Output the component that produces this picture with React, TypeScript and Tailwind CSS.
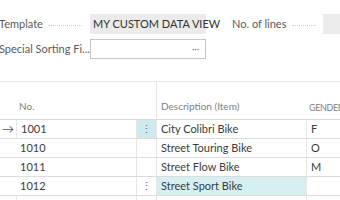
import React from "react";

const rows = [
  { no: "1001", desc: "City Colibri Bike", gender: "F", current: true },
  { no: "1010", desc: "Street Touring Bike", gender: "O" },
  { no: "1011", desc: "Street Flow Bike", gender: "M" },
  { no: "1012", desc: "Street Sport Bike", gender: "", focus: true },
];

function Leader() {
  return <span className="flex-1 border-b border-dotted border-[#cfcfcf] h-0 mt-[3px]" />;
}

export default function App() {
  return (
    <div
      className="w-[340px] h-[200px] overflow-hidden bg-white text-[11px] text-[#3c3c3c]"
      style={{ fontFamily: 'Lato, "Liberation Sans", sans-serif' }}
    >
      {/* fields */}
      <div className="flex flex-col gap-[5px] pt-[14px] h-[81px]">
        <div className="flex items-center h-5">
          <div className="w-[90px] flex items-center gap-[5px] pr-[8px] shrink-0 text-[#5a5a5a]">
            <span className="ml-[-1px]">Template</span>
            <Leader />
          </div>
          <div className="w-[116px] h-5 bg-[#ebebeb] flex items-center pl-[3px] shrink-0 whitespace-nowrap text-[#333]">
            MY CUSTOM DATA VIEW
          </div>
          <div className="ml-[26px] w-[91px] pr-[7px] flex items-center gap-[6px] text-[#5a5a5a] whitespace-nowrap shrink-0">
            <span>No. of lines</span>
            <Leader />
          </div>
          <div className="w-[40px] h-5 bg-[#ebebeb] shrink-0" />
        </div>
        <div className="flex items-center h-5">
          <div className="w-[90px] pr-[8px] shrink-0 text-[#5a5a5a] whitespace-nowrap overflow-hidden">
            <span className="ml-[-1px]">Special Sorting Fi...</span>
          </div>
          <div className="w-[116px] h-5 border border-[#c6c6c6] flex items-center justify-end pr-[6px] text-[#777] text-[9px] shrink-0">
            ···
          </div>
        </div>
      </div>

      {/* grid */}
      <div className="border-t border-[#e6e6e6]">
        <div className="flex h-[38px] border-b border-[#dcdcdc] text-[#808080] text-[10px]">
          <div className="w-[156px] shrink-0 flex items-end pb-[5px] pl-[19px]">No.</div>
          <div className="w-[150px] shrink-0 flex items-end pb-[5px] pl-[4px] border-l border-[#e6e6e6]">
            Description (Item)
          </div>
          <div className="flex-1 flex items-end pb-[5px] pl-[3px] whitespace-nowrap text-[9px] tracking-[-0.4px]">
            GENDER
          </div>
        </div>
        {rows.map((r) => (
          <div key={r.no} className="flex h-[19px] border-b border-[#dcdcdc]">
            <div className="w-4 shrink-0 flex items-center justify-center text-[#555] text-[12px]">
              {r.current ? "→" : ""}
            </div>
            <div className={`w-[120px] shrink-0 flex items-center pl-[4px] ${r.current ? "border-l border-[#e6e6e6]" : ""}`}>
              {r.no}
            </div>
            <div
              className={`w-5 shrink-0 flex items-center justify-center border-l border-[#e6e6e6] text-[#666] ${
                r.current ? "bg-[#cdebee]" : ""
              }`}
            >
              {r.current || r.focus ? "⋮" : ""}
            </div>
            <div
              className={`w-[150px] shrink-0 flex items-center pl-[4px] border-l border-[#e6e6e6] ${
                r.focus ? "bg-[#d6eff0]" : ""
              }`}
            >
              {r.desc}
            </div>
            <div className="flex-1 flex items-center pl-[4px] border-l border-[#e6e6e6]">{r.gender}</div>
          </div>
        ))}
        <div className="flex h-5">
          <div className="w-4 shrink-0" />
          <div className="w-[120px] shrink-0 border-l border-[#e6e6e6]" />
          <div className="w-5 shrink-0 border-l border-[#e6e6e6]" />
          <div className="w-[150px] shrink-0 border-l border-[#e6e6e6]" />
          <div className="flex-1 border-l border-[#e6e6e6]" />
        </div>
      </div>
    </div>
  );
}
